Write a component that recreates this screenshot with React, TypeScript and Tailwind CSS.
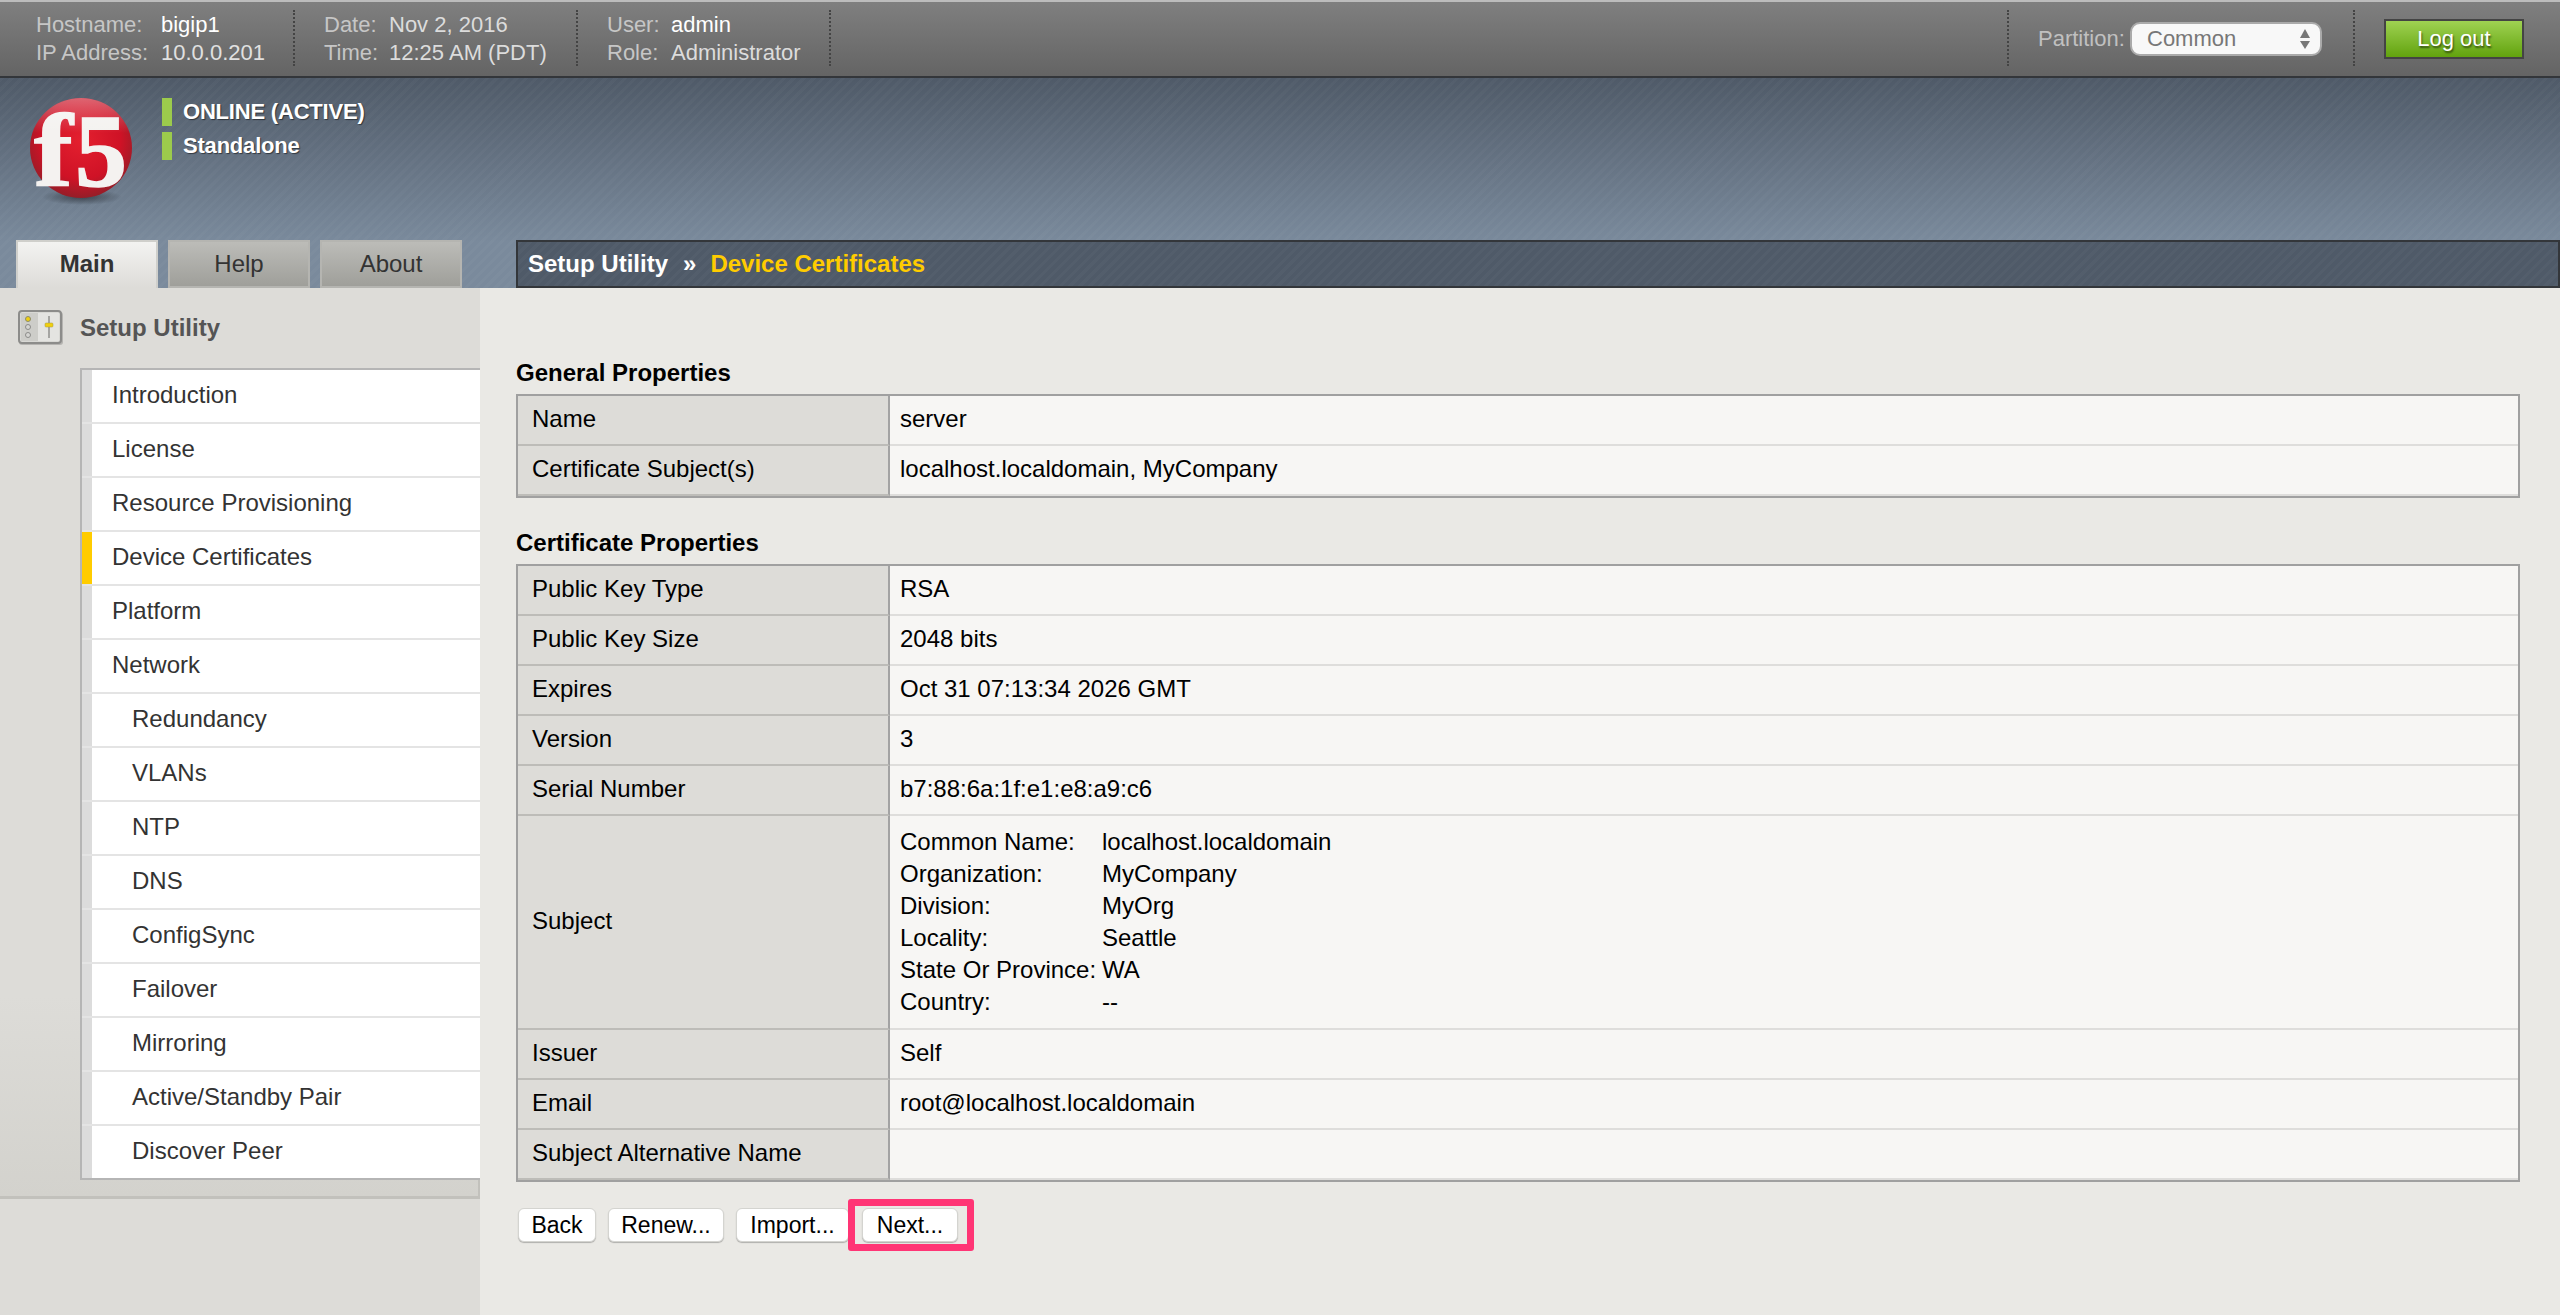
import React from 'react';

const navItems = [
    {label: 'Introduction'},
    {label: 'License'},
    {label: 'Resource Provisioning'},
    {label: 'Device Certificates', active: true},
    {label: 'Platform'},
    {label: 'Network'},
    {label: 'Redundancy', sub: true},
    {label: 'VLANs', sub: true},
    {label: 'NTP', sub: true},
    {label: 'DNS', sub: true},
    {label: 'ConfigSync', sub: true},
    {label: 'Failover', sub: true},
    {label: 'Mirroring', sub: true},
    {label: 'Active/Standby Pair', sub: true},
    {label: 'Discover Peer', sub: true},
];

const subjectRows = [
    ['Common Name:', 'localhost.localdomain'],
    ['Organization:', 'MyCompany'],
    ['Division:', 'MyOrg'],
    ['Locality:', 'Seattle'],
    ['State Or Province:', 'WA'],
    ['Country:', '--'],
];

function Dots() {
    return <div className="mt-[8px] h-[56px] w-0 self-start border-l-2 border-dotted border-[#444]"/>;
}

function F5Logo() {
    return (
        <svg width="112" height="132" viewBox="0 -20 112 132" className="shrink-0">
            <defs>
                <radialGradient id="ball" cx="0.5" cy="0.42" r="0.6">
                    <stop offset="0" stopColor="#e4202f"/>
                    <stop offset="0.65" stopColor="#cf1226"/>
                    <stop offset="1" stopColor="#8f1f28"/>
                </radialGradient>
                <radialGradient id="shadow">
                    <stop offset="0" stopColor="#2b3138" stopOpacity="0.75"/>
                    <stop offset="1" stopColor="#2b3138" stopOpacity="0"/>
                </radialGradient>
                <linearGradient id="shine" x1="0" y1="0" x2="0" y2="1">
                    <stop offset="0" stopColor="#ffffff" stopOpacity="0.35"/>
                    <stop offset="0.35" stopColor="#ffffff" stopOpacity="0"/>
                </linearGradient>
            </defs>
            <ellipse cx="52" cy="99" rx="40" ry="8" fill="url(#shadow)"/>
            <ellipse cx="51" cy="50" rx="51" ry="50" fill="url(#ball)"/>
            <g fill="#f4f2f0" stroke="#f4f2f0" strokeWidth="1.5" fontFamily='"Liberation Serif", serif' fontWeight="700">
                <text x="0" y="0" fontSize="104" transform="translate(4 87) scale(1.12 1)">f</text>
                <text x="0" y="0" fontSize="104" transform="translate(45 88) scale(1 1)">5</text>
            </g>
            <ellipse cx="51" cy="50" rx="51" ry="50" fill="url(#shine)"/>
        </svg>
    );
}

function SetupIcon() {
    return (
        <svg width="46" height="36" viewBox="0 0 46 36" className="shrink-0">
            <rect x="1" y="2" width="44" height="33" rx="3" fill="#000" opacity="0.18"/>
            <rect x="1" y="1" width="42" height="32" rx="3" fill="#d8d8d4" stroke="#8c8c8a" strokeWidth="2"/>
            <rect x="3" y="3" width="17" height="28" fill="#cdcdc9"/>
            <rect x="20" y="3" width="21" height="28" fill="#e4e4e1"/>
            <circle cx="10" cy="9" r="2.5" fill="#f0cf10" stroke="#8c8c6a"/>
            <circle cx="10" cy="17" r="2.5" fill="#d5d5d2" stroke="#8c8c8a"/>
            <circle cx="10" cy="25" r="2.5" fill="#d5d5d2" stroke="#8c8c8a"/>
            <rect x="30" y="6" width="2" height="22" fill="#a5a5a2"/>
            <rect x="27" y="13" width="8" height="4" rx="1" fill="#f0cf10" stroke="#a59a40" strokeWidth="0.5"/>
        </svg>
    );
}

function Field({label, children, tall}: { label: string; children?: React.ReactNode; tall?: boolean }) {
    return (
        <div className={`flex ${tall ? 'h-[214px]' : 'h-[50px]'}`}>
            <div className="flex w-[372px] shrink-0 items-center border-b-2 border-r-2 border-b-[#bdbcb8] border-r-[#a3a3a3] bg-[#dddcd8] pb-[2px] pl-[14px] text-black">{label}</div>
            <div className="flex flex-1 items-center border-b-2 border-[#dedddb] bg-[#f7f6f4] pb-[2px] pl-[10px] text-black">{children}</div>
        </div>
    );
}

function Section({title, children}: { title: string; children: React.ReactNode }) {
    return (
        <>
            <h2 className="mb-[3px] flex h-[36px] items-center font-bold text-black">{title}</h2>
            <div className="border-2 border-[#a0a0a0]">{children}</div>
        </>
    );
}

function ActionButton({label, width}: { label: string; width: string }) {
    return (
        <button className={`h-[34px] rounded-[6px] border border-[#d4d4d0] bg-white text-[23px] leading-none text-black shadow-[0_1px_1px_rgba(0,0,0,0.25)] ${width}`}>
            {label}
        </button>
    );
}

export default function App() {
    return (
        <div className="flex h-[1315px] flex-col overflow-hidden bg-[#eae9e5] font-['Liberation_Sans',Arial,sans-serif] text-[24px] leading-none">
            <div className="flex h-[78px] shrink-0 items-stretch border-b-2 border-t-2 border-b-[#33363a] border-t-[#bcbcbc] bg-[linear-gradient(#7f7f7f,#646464)] pr-[36px] text-[22px]">
                <div className="w-[36px] shrink-0"/>
                <div className="flex w-[257px] flex-col justify-center">
                    <div className="flex h-[28px] items-center"><span className="w-[125px] text-[#c6c6c6]">Hostname:</span><span className="text-white">bigip1</span></div>
                    <div className="flex h-[28px] items-center"><span className="w-[125px] text-[#c6c6c6]">IP Address:</span><span className="text-[#e0e0e0]">10.0.0.201</span></div>
                </div>
                <Dots/>
                <div className="ml-[29px] flex w-[252px] flex-col justify-center">
                    <div className="flex h-[28px] items-center"><span className="w-[65px] text-[#c6c6c6]">Date:</span><span className="text-[#dcdcdc]">Nov 2, 2016</span></div>
                    <div className="flex h-[28px] items-center"><span className="w-[65px] text-[#c6c6c6]">Time:</span><span className="text-[#dcdcdc]">12:25 AM (PDT)</span></div>
                </div>
                <Dots/>
                <div className="ml-[29px] flex w-[222px] flex-col justify-center">
                    <div className="flex h-[28px] items-center"><span className="w-[64px] text-[#c6c6c6]">User:</span><span className="text-white">admin</span></div>
                    <div className="flex h-[28px] items-center"><span className="w-[64px] text-[#c6c6c6]">Role:</span><span className="text-[#dcdcdc]">Administrator</span></div>
                </div>
                <Dots/>
                <div className="flex-1"/>
                <Dots/>
                <div className="flex w-[344px] items-center pl-[29px]">
                    <span className="w-[92px] text-[#c0c0c0]">Partition:</span>
                    <div className="flex h-[34px] w-[192px] items-center justify-between rounded-[10px] border-2 border-[#aaaaaa] bg-[#f8f8f8] pl-[15px] pr-[10px] text-[#777]">
                        <span>Common</span>
                        <span className="flex flex-col gap-[3px]">
                            <svg width="10" height="9" viewBox="0 0 10 9"><path d="M5 0 10 9H0z" fill="#777"/></svg>
                            <svg width="10" height="8" viewBox="0 0 10 8"><path d="M0 0H10L5 8z" fill="#777"/></svg>
                        </span>
                    </div>
                </div>
                <Dots/>
                <div className="ml-[29px] flex items-center">
                    <button className="h-[40px] w-[140px] border-2 border-[#444] bg-[linear-gradient(#9fd252,#62a30e)] text-[22px] text-white [text-shadow:1px_2px_2px_rgba(0,0,0,0.55)]">Log out</button>
                </div>
            </div>

            <div className="flex h-[210px] shrink-0 flex-col bg-[repeating-linear-gradient(135deg,rgba(255,255,255,0.025)_0px,rgba(255,255,255,0.025)_3px,transparent_3px,transparent_7px),linear-gradient(#4f5a68,#7a8a9c_78%,#7a8a9c)]">
                <div className="flex h-[162px] pl-[30px]">
                    <F5Logo/>
                    <div className="ml-[20px] mt-[20px] flex flex-col gap-[6px] text-[22px] font-bold tracking-[-0.2px] text-white [text-shadow:1px_1px_1px_rgba(0,0,0,0.5)]">
                        <div className="flex h-[28px] items-center gap-[11px]"><span className="h-[28px] w-[10px] bg-[#9ccb4c]"/>ONLINE (ACTIVE)</div>
                        <div className="flex h-[28px] items-center gap-[11px]"><span className="h-[28px] w-[10px] bg-[#9ccb4c]"/>Standalone</div>
                    </div>
                </div>
                <div className="flex h-[48px] pl-[16px]">
                    <div className="flex h-[48px] w-[142px] items-center justify-center border-2 border-b-0 border-[#cfcfcb] bg-[linear-gradient(#f3f3f1,#dddcd8)] pb-[2px] font-bold text-[#333]">Main</div>
                    <div className="ml-[10px] flex h-[48px] w-[142px] items-center justify-center border-2 border-[#b5b5b1] bg-[linear-gradient(#bcbcb8,#9f9f9a)] text-[#333]">Help</div>
                    <div className="ml-[10px] flex h-[48px] w-[142px] items-center justify-center border-2 border-[#b5b5b1] bg-[linear-gradient(#bcbcb8,#9f9f9a)] text-[#333]">About</div>
                    <div className="ml-[54px] flex flex-1 items-center border-2 border-[#33363a] bg-[repeating-linear-gradient(135deg,rgba(255,255,255,0.025)_0px,rgba(255,255,255,0.025)_3px,transparent_3px,transparent_7px),linear-gradient(#4f5a68,#4f5a68)] pl-[10px] font-bold text-white">
                        <span>Setup Utility</span>
                        <span className="ml-[15px] mr-[14px]">»</span>
                        <span className="text-[#ffcc00]">Device Certificates</span>
                    </div>
                </div>
            </div>

            <div className="flex flex-1">
                <aside className="w-[480px] shrink-0 bg-[#dddcd8]">
                    <div className="flex flex-col border-b-[3px] border-[#c2c1bc] bg-[linear-gradient(#dddcd8_78%,#d3d2cd)]">
                        <div className="flex h-[80px] items-center gap-[16px] pl-[18px]">
                            <SetupIcon/>
                            <span className="font-bold text-[#555]">Setup Utility</span>
                        </div>
                        <ul className="ml-[80px] border-y-2 border-l-2 border-[#b5b5b5] bg-white">
                            {navItems.map((item) => (
                                <li key={item.label} className="flex h-[54px] border-b-2 border-[#e4e4e4] last:h-[52px] last:border-b-0">
                                    <span className={`w-[10px] shrink-0 ${item.active ? 'bg-[#ffcc00]' : 'bg-[#dcdcdc]'}`}/>
                                    <span className={`flex items-center pb-[2px] text-[#333] ${item.sub ? 'pl-[40px]' : 'pl-[20px]'}`}>{item.label}</span>
                                </li>
                            ))}
                        </ul>
                        <div className="h-[16px] border-r-2 border-[#c2c1bc]"/>
                    </div>
                </aside>

                <main className="flex-1 pl-[36px] pr-[40px] pt-[67px]">
                    <Section title="General Properties">
                        <Field label="Name">server</Field>
                        <Field label="Certificate Subject(s)">localhost.localdomain, MyCompany</Field>
                    </Section>
                    <div className="h-[27px]"/>
                    <Section title="Certificate Properties">
                        <Field label="Public Key Type">RSA</Field>
                        <Field label="Public Key Size">2048 bits</Field>
                        <Field label="Expires">Oct 31 07:13:34 2026 GMT</Field>
                        <Field label="Version">3</Field>
                        <Field label="Serial Number">b7:88:6a:1f:e1:e8:a9:c6</Field>
                        <Field label="Subject" tall>
                            <div className="mt-[2px] grid auto-rows-[32px] grid-cols-[202px_1fr] items-center">
                                {subjectRows.map(([k, v]) => (
                                    <React.Fragment key={k}>
                                        <span>{k}</span>
                                        <span>{v}</span>
                                    </React.Fragment>
                                ))}
                            </div>
                        </Field>
                        <Field label="Issuer">Self</Field>
                        <Field label="Email">root@localhost.localdomain</Field>
                        <Field label="Subject Alternative Name"/>
                    </Section>
                    <div className="mt-[26px] flex items-center pl-[2px]">
                        <ActionButton label="Back" width="w-[78px]"/>
                        <div className="w-[12px]"/>
                        <ActionButton label="Renew..." width="w-[116px]"/>
                        <div className="w-[12px]"/>
                        <ActionButton label="Import..." width="w-[113px]"/>
                        <div className="relative ml-[13px] flex">
                            <ActionButton label="Next..." width="w-[96px]"/>
                            <div className="pointer-events-none absolute -bottom-[9px] -left-[14px] -right-[16px] -top-[9px] rounded-[3px] border-[7px] border-[#ff3575]"/>
                        </div>
                    </div>
                </main>
            </div>
        </div>
    );
}
